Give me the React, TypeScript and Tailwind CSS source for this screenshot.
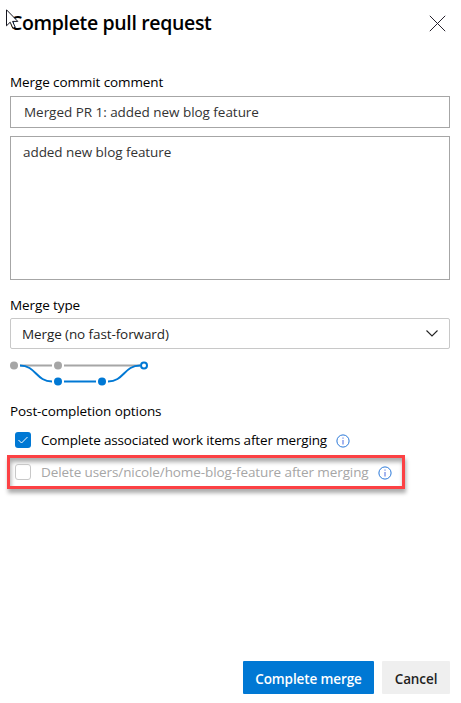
import React from "react";

function InfoIcon() {
  return (
    <svg width="14" height="14" viewBox="0 0 14 14" fill="none" className="relative top-px block shrink-0">
      <circle cx="7" cy="7" r="6.100" stroke="#2a78d8" />
      <path d="M7 6v4.500" stroke="#4a6ae0" />
      <path d="M7 3.500v1.200" stroke="#4a6ae0" />
    </svg>
  );
}

function MergeGraph() {
  return (
    <svg width="140" height="27" viewBox="0 0 140 27" fill="none" className="block">
      <g stroke="#a6a6a6" strokeWidth="2">
        <path d="M10 6.500H42M54 6.500H130" />
      </g>
      <g fill="#a6a6a6">
        <circle cx="4" cy="6.500" r="4" />
        <circle cx="48" cy="6.500" r="4" />
      </g>
      <g stroke="#0078d4" strokeWidth="2">
        <path d="M10 6.500C26 6.500 26 22.500 42 22.500" />
        <path d="M54 22.500H86" />
        <path d="M98 22.500C114 22.500 114 6.500 130 6.500" />
        <circle cx="134" cy="6.500" r="3" fill="#fff" />
      </g>
      <g fill="#0078d4">
        <circle cx="48" cy="22.500" r="4" />
        <circle cx="92" cy="22.500" r="4" />
      </g>
    </svg>
  );
}

export default function App() {
  return (
    <div className="relative flex h-[703px] w-[461px] flex-col overflow-hidden bg-white pr-[11px] pl-[10px] font-['Open_Sans','Noto_Sans',sans-serif] text-[13.5px] leading-5 tracking-[-0.1px] whitespace-nowrap text-black">
      <header className="flex h-[72px] shrink-0 items-start justify-between pt-[9px]">
        <h1 className="text-[19.5px] leading-7 font-semibold tracking-[-0.35px]">Complete pull request</h1>
        <svg width="17" height="17" viewBox="0 0 17 17" className="mt-[6px] mr-[4px]">
          <path d="M.8.8l15.400 15.400M16.200.8L.8 16.200" stroke="#25202c" />
        </svg>
      </header>
      <svg width="14" height="22" viewBox="0 0 14 22" className="absolute top-[9px] left-[6px]">
        <path d="M.5.8v16l3.700-3.600 2.600 6 2.400-1-2.600-5.800h5.200z" fill="#fff" stroke="#15151f" />
      </svg>

      <label className="h-6 shrink-0"><span>Merge commit comment</span></label>
      <div className="flex h-8 shrink-0 items-center border border-[#a6a6a6] pl-[13px] tracking-[-0.04px] text-[#333]"><span>Merged PR 1: added new blog feature</span></div>
      <div className="mt-2 h-36 shrink-0 border border-[#a6a6a6] pt-[5px] pl-3 tracking-[-0.06px] text-[#333]"><span>added new blog feature</span></div>

      <div className="mt-[15px] h-[23px] shrink-0"><span>Merge type</span></div>
      <div className="flex h-[31px] shrink-0 items-center justify-between rounded-[2px] border border-[#c8c8c8] pr-[11px] pl-[11px] text-[#1f1f1f]">
        <span>Merge (no fast-forward)</span>
        <svg width="12" height="7" viewBox="0 0 12 7" fill="none"><path d="M.5.5L6 6 11.500.5" stroke="#222" strokeWidth="1.100" /></svg>
      </div>
      <div className="mt-[10px] h-[42px] shrink-0"><MergeGraph /></div>

      <div className="h-[30px] shrink-0"><span>Post-completion options</span></div>
      <div className="flex h-[18px] shrink-0 items-center pl-[5px]">
        <div className="flex size-4 items-center justify-center rounded-[3px] bg-[#0078d4]">
          <svg width="10" height="8" viewBox="0 0 10 8" fill="none"><path d="M.5 4l3 3L9.500 1" stroke="#fff" /></svg>
        </div>
        <span className="ml-[10px] w-[286px] tracking-[-0.15px]">Complete associated work items after merging</span>
        <span className="ml-[9px]"><InfoIcon /></span>
      </div>
      <div className="mt-[6px] -ml-[3px] flex h-[34px] w-[398px] shrink-0 items-center border-3 border-[#fc4144] pl-[5px] shadow-[1px_4px_4px_rgba(0,0,0,0.33),inset_1px_4px_4px_rgba(0,0,0,0.33)]">
        <div className="size-4 shrink-0 rounded-[3px] border border-[#c8c8c8]" />
        <span className="ml-[10px] w-[328px] text-[#a6a6a6]">Delete users/nicole/home-blog-feature after merging</span>
        <span className="ml-[9px]"><InfoIcon /></span>
      </div>

      <footer className="mt-auto mb-[9px] flex justify-end gap-2 font-semibold">
        <button className="h-[33px] w-[131px] rounded-[1px] bg-[#0078d4] pt-0.5 text-white"><span>Complete merge</span></button>
        <button className="h-[33px] w-[68px] rounded-[1px] bg-[#efefef] pt-0.5 text-[#1f1f1f]"><span>Cancel</span></button>
      </footer>
    </div>
  );
}
